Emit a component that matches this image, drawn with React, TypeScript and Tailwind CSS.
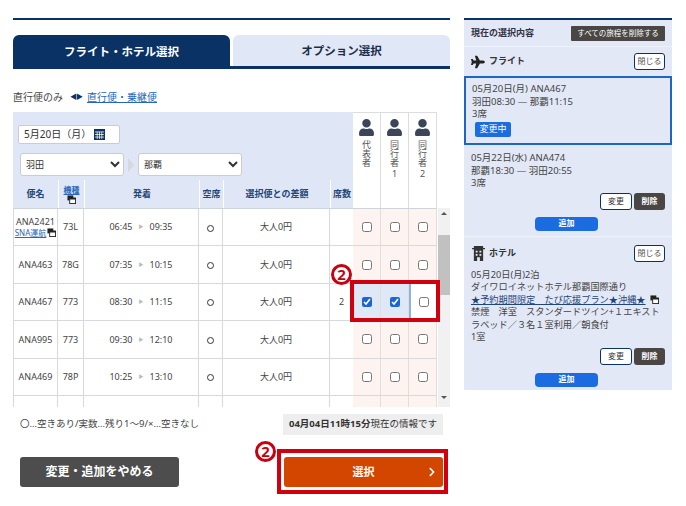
import React from 'react';
import { FaUser, FaPlane, FaChevronRight } from 'react-icons/fa';

const flights = [
  { no: 'ANA2421', type: '73L', dep: '06:45', arr: '09:35', sna: true },
  { no: 'ANA463', type: '78G', dep: '07:35', arr: '10:15' },
  { no: 'ANA467', type: '773', dep: '08:30', arr: '11:15', seats: '2', picked: true },
  { no: 'ANA995', type: '773', dep: '09:30', arr: '12:10' },
  { no: 'ANA469', type: '78P', dep: '10:25', arr: '13:10' },
  { no: '', type: '', dep: '', arr: '' },
];

const WindowIcon = ({ className }: { className?: string }) => (
  <svg viewBox="0 0 10 10" className={className}>
    <rect x="0.5" y="0.5" width="6.5" height="5.5" fill="#222" />
    <rect x="3" y="3.5" width="6.5" height="6" fill="#fff" stroke="#222" />
    <rect x="3" y="3" width="6.5" height="2" fill="#222" />
  </svg>
);

const Badge = ({ className }: { className: string }) => (
  <div className={`absolute z-20 flex h-[21px] w-[21px] items-center justify-center rounded-full border-[3px] border-[#c8000f] bg-white text-[15px] font-bold leading-none text-[#c8000f] ${className}`}>
    2
  </div>
);

const SmallButtons = () => (
  <div className="flex justify-end gap-[2px] pr-[7px]">
    <button className="h-[17px] w-[32px] rounded-[3px] border border-[#0b3265] bg-white text-[8px] text-[#333]">変更</button>
    <button className="h-[17px] w-[31px] rounded-[3px] bg-[#4a4644] text-[8px] font-bold text-white">削除</button>
  </div>
);

const AddButton = () => (
  <div className="flex justify-center pr-[3px]">
    <button className="h-[14px] w-[63px] rounded-[4px] bg-[#1a6ce0] text-[8px] font-bold text-white">追加</button>
  </div>
);

const CloseButton = () => (
  <button className="h-[17px] w-[31px] rounded-[3px] border border-[#0b3265] bg-white text-[8px] text-[#555]">閉じる</button>
);

const rowGrid = 'grid grid-cols-[45px_26px_115px_24px_107px_23px_28px_28px_28px]';

export default function App() {
  return (
    <div className="relative flex h-[506px] w-[686px] gap-[14px] overflow-hidden bg-white pl-[13px] pt-[18px] font-['Noto_Sans','Noto_Sans_CJK_JP',sans-serif] text-[#333]">
      {/* main column */}
      <div className="w-[437px] shrink-0">
        <div className="h-[2px] bg-[#0b3265]" />

        <div className="mt-[15px] flex h-[34px] gap-[3px] border-b-[3px] border-[#0b3265]">
          <div className="flex h-[34px] w-[217px] items-center justify-center rounded-t-[6px] bg-[#0b3265] text-[11.5px] font-bold text-white">
            フライト・ホテル選択
          </div>
          <div className="flex h-[31px] w-[217px] items-center justify-center rounded-t-[6px] bg-[#e0e7f6] text-[11.5px] font-bold text-[#1d2c48]">
            オプション選択
          </div>
        </div>

        <div className="mt-[20px] flex h-[17px] items-center text-[10px] text-[#444]">
          <span>直行便のみ</span>
          <span className="ml-[7px] mr-[5px] text-[7px] tracking-[-1px] text-[#0b3265]">◀▶</span>
          <span className="text-[#2767b5] underline">直行便・乗継便</span>
        </div>

        <div className="mt-[6px] flex h-[96px]">
          <div className="flex w-[340px] flex-col bg-[#dfe6f5]">
            <div className="h-[68px] pl-[5px] pt-[13px]">
              <div className="flex h-[19px] w-[102px] items-center gap-[3px] rounded-[2px] border border-[#ccc] bg-white pl-[5px] text-[10px] text-[#333]">
                5月20日（月）
                <svg viewBox="0 0 12 12" className="h-[11px] w-[11px]">
                  <rect width="12" height="12" fill="#0b3265" />
                  <path d="M1 3.2h10M1 6h10M1 8.8h10M3.5 3v8M6 3v8M8.5 3v8" stroke="#fff" strokeWidth="0.8" />
                </svg>
              </div>
              <div className="ml-[2px] mt-[9px] flex items-center">
                <select className="h-[23px] w-[104px] rounded-[3px] border border-[#ccc] bg-white pl-[1px] text-[9px] text-[#333]">
                  <option>羽田</option>
                </select>
                <span className="mx-[4px] h-0 w-0 border-y-[7px] border-l-[6px] border-y-transparent border-l-[#d4d8e0]" />
                <select className="h-[23px] w-[104px] rounded-[3px] border border-[#ccc] bg-white pl-[1px] text-[9px] text-[#333]">
                  <option>那覇</option>
                </select>
              </div>
            </div>
            <div className="grid h-[28px] grid-cols-[45px_26px_115px_24px_107px_23px] items-stretch text-[9px] font-bold text-[#1f4679]">
              <div className="flex items-center justify-center">便名</div>
              <div className="flex flex-col items-center justify-center border-l border-white text-[8px] leading-[11px]">
                <span className="text-[#2767b5] underline">機種</span>
                <WindowIcon className="h-[9px] w-[9px]" />
              </div>
              <div className="flex items-center justify-center border-l border-white">発着</div>
              <div className="flex items-center justify-center border-l border-white">空席</div>
              <div className="flex items-center justify-center border-l border-white">選択便との差額</div>
              <div className="flex items-center justify-center border-l border-white">席数</div>
            </div>
          </div>
          {['代表者', '同行者1', '同行者2'].map((who) => (
            <div key={who} className="flex w-[28px] flex-col items-center border-r border-t border-[#ddd] pt-[6px] first:border-l">
              <FaUser className="h-[17px] w-[17px] text-[#3b4658]" />
              <span className="mt-[4px] text-[9px] leading-[11px] text-[#555] [text-orientation:upright] [writing-mode:vertical-rl]">{who}</span>
            </div>
          ))}
        </div>

        <div className="flex h-[199px] w-[437px]">
          <div className="h-[199px] w-[424px] shrink-0 overflow-hidden border-t border-[#cfd4dc]">
            {flights.map((f, i) => (
              <div key={i} className={`${rowGrid} h-[37.4px] shrink-0 border-b border-[#d6d9df] text-[9px] text-[#444]`}>
                <div className="flex flex-col items-center justify-center border-x border-[#d6d9df] leading-[11px]">
                  <span>{f.no}</span>
                  {f.sna && (
                    <span className="flex items-center gap-[1px] whitespace-nowrap text-[8px] text-[#2767b5] underline">
                      SNA運航
                      <WindowIcon className="h-[9px] w-[9px] shrink-0" />
                    </span>
                  )}
                </div>
                <div className="flex items-center justify-center border-r border-[#d6d9df]">{f.type}</div>
                <div className="flex items-center justify-center gap-[6px] border-r border-[#d6d9df]">
                  <span>{f.dep}</span>
                  {f.dep && <span className="text-[5px] text-[#bbb]">▶</span>}
                  <span>{f.arr}</span>
                </div>
                <div className="flex items-center justify-center border-r border-[#d6d9df]">
                  {f.no && <span className="mt-[2px] h-[7px] w-[7px] rounded-full border border-[#333]" />}
                </div>
                <div className="flex items-center justify-center border-r border-[#d6d9df]">{f.no && '大人0円'}</div>
                <div className="flex items-center justify-center text-center">{f.seats}</div>
                {[0, 1, 2].map((c) => {
                  const on = f.picked && c < 2;
                  const last = f.picked && c === 2;
                  return (
                    <div
                      key={c}
                      className={`flex items-center justify-center border-r border-[#e2dedd] first:border-l ${on ? 'bg-[#dfe8f7]' : last ? 'border-l-2 border-l-[#8fb2e4] bg-white' : 'bg-[#fdf3f0]'}`}
                    >
                      {f.no && <input type="checkbox" defaultChecked={on} readOnly className="h-[10px] w-[10px] accent-[#1a66d6]" />}
                    </div>
                  );
                })}
              </div>
            ))}
          </div>
          <div className="ml-[1px] flex w-[12px] flex-col items-center bg-[#f1f1f1]">
            <span className="mt-[4px] h-0 w-0 border-x-[3px] border-b-[3px] border-x-transparent border-b-[#555]" />
            <div className="mt-[20px] h-[60px] w-full bg-[#c1c1c1]" />
            <div className="flex-1" />
            <span className="mb-[8px] h-0 w-0 border-x-[3px] border-t-[3px] border-x-transparent border-t-[#555]" />
          </div>
        </div>

        <div className="mt-[7px] flex items-center justify-between pl-[7px] pr-[7px]">
          <span className="text-[9.5px] text-[#444]">〇…空きあり/実数…残り1～9/×…空きなし</span>
          <div className="flex h-[21px] w-[160px] items-center justify-center bg-[#eeeeee] text-[9.5px] font-bold text-[#333]">
            04月04日11時15分<span className="font-normal">現在の情報です</span>
          </div>
        </div>

        <div className="mt-[22px] flex justify-between pl-[7px] pr-[7px]">
          <button className="h-[30px] w-[159px] rounded-[3px] bg-[#4d4d4d] text-[12px] font-bold text-white">変更・追加をやめる</button>
          <button className="relative h-[30px] w-[159px] rounded-[3px] bg-[#d34600] text-[11px] font-bold text-white">
            選択
            <FaChevronRight className="absolute right-[6px] top-[10px] h-[10px] w-[10px]" />
          </button>
        </div>
      </div>

      {/* selection summary */}
      <div className="h-[372px] w-[208px] shrink-0 border-t-2 border-[#0b3265] bg-[#e2e8f6] text-[9.5px] leading-[12.5px] text-[#444]">
        <div className="flex h-[27px] items-center justify-between border-b border-[#eef1f8] pl-[7px] pr-[7px]">
          <span className="text-[9px] font-bold text-[#334]">現在の選択内容</span>
          <button className="h-[15px] w-[94px] rounded-[1px] bg-[#4a4644] text-[7.5px] text-white">すべての旅程を削除する</button>
        </div>
        <div className="flex h-[29px] items-center justify-between pl-[7px] pr-[7px]">
          <span className="flex items-center gap-[4px] text-[9px] font-bold text-[#333]">
            <FaPlane className="h-[14px] w-[14px] text-[#222]" />
            フライト
          </span>
          <CloseButton />
        </div>
        <div className="h-[69px] border-2 border-[#1d66c4] pl-[6px] pt-[5px]">
          <div>05月20日(月) ANA467</div>
          <div>羽田08:30 ― 那覇11:15</div>
          <div>3席</div>
          <div className="ml-[3px] mt-[1px] flex h-[15px] w-[36px] items-center justify-center rounded-[2px] bg-[#1a6ce0] text-[9px] text-white">変更中</div>
        </div>
        <div className="pl-[7px] pt-[7px]">
          <div>05月22日(水) ANA474</div>
          <div>那覇18:30 ― 羽田20:55</div>
          <div>3席</div>
        </div>
        <div className="mt-[3px]">
          <SmallButtons />
        </div>
        <div className="mt-[7px] border-b border-[#eef1f8] pb-[5px]">
          <AddButton />
        </div>
        <div className="flex h-[29px] items-center justify-between pl-[8px] pr-[7px] pt-[4px]">
          <span className="flex items-center gap-[4px] text-[9px] font-bold text-[#333]">
            <svg viewBox="0 0 14 16" className="h-[15px] w-[13px]">
              <path d="M2 0h10v16H8.5v-4h-3v4H2zM0 2h14v1.5H0z" fill="#333" />
              <path d="M4 5h2v2H4zM8 5h2v2H8zM4 8.5h2v2H4zM8 8.5h2v2H8z" fill="#e2e8f6" />
            </svg>
            ホテル
          </span>
          <CloseButton />
        </div>
        <div className="pl-[7px] pr-[5px] pt-[3px] text-[9.2px]">
          <div>05月20日(月)2泊</div>
          <div className="whitespace-nowrap">ダイワロイネットホテル那覇国際通り</div>
          <div className="flex items-center gap-[4px] whitespace-nowrap text-[#1f4679]">
            <span className="underline">★予約期間限定　たび応援プラン★沖縄★</span>
            <WindowIcon className="h-[9px] w-[9px]" />
          </div>
          <div className="whitespace-nowrap">禁煙　洋室　スタンダードツイン+１エキスト</div>
          <div>ラベッド／３名１室利用／朝食付</div>
          <div>1室</div>
        </div>
        <div className="mt-[4px]">
          <SmallButtons />
        </div>
        <div className="mt-[8px]">
          <AddButton />
        </div>
      </div>

      {/* callouts */}
      <div className="pointer-events-none absolute left-[350px] top-[280px] z-10 h-[42px] w-[90px] border-[4px] border-[#d0000f]" />
      <Badge className="left-[331px] top-[264px]" />
      <div className="pointer-events-none absolute left-[277px] top-[449px] z-10 h-[45px] w-[171px] border-[4px] border-[#d0000f]" />
      <Badge className="left-[255px] top-[441px]" />
    </div>
  );
}
